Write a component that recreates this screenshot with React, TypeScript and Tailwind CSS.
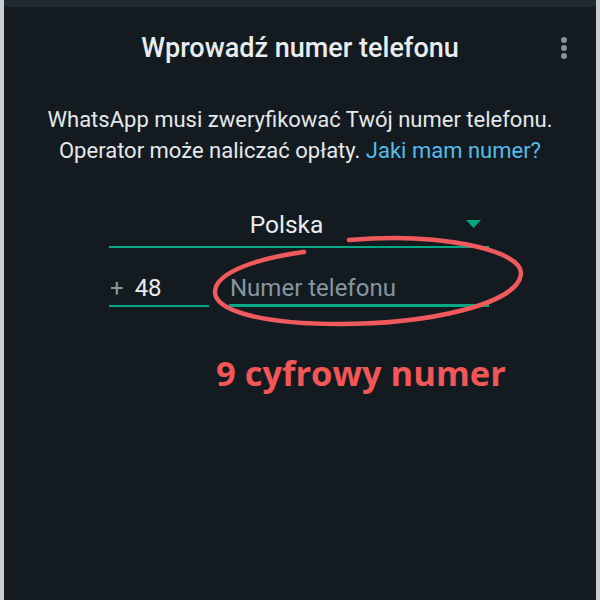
import React from "react";

const font = { fontFamily: "Roboto, 'Noto Sans', sans-serif" };

const Dots = () => (
  <svg width="8" height="24" viewBox="0 0 8 24" className="fill-[#8a9399]">
    <circle cx="4" cy="4" r="3" />
    <circle cx="4" cy="12" r="3" />
    <circle cx="4" cy="20" r="3" />
  </svg>
);

const Ellipse = () => (
  <svg
    className="pointer-events-none absolute left-[205px] top-[232px]"
    width="325"
    height="100"
    viewBox="0 0 325 100"
    fill="none"
  >
    <path
      d="M140 8 C 230 0, 314 18, 312 42 C 309 72, 220 92, 130 92 C 50 92, 6 78, 6 60 C 6 40, 50 26, 95 20"
      stroke="#f05a5c"
      strokeWidth="4.5"
      strokeLinecap="round"
    />
  </svg>
);

export default function App() {
  return (
    <div
      className="relative flex h-[600px] w-[600px] flex-col overflow-hidden border-x-4 border-[#c9ced1] bg-[#131b21]"
      style={font}
    >
      <div className="h-[7px] bg-[#1e2930]" />
      <div className="relative flex h-[82px] items-center justify-center">
        <h1 className="text-[27px] font-medium text-[#e9edef]">Wprowadź numer telefonu</h1>
        <div className="absolute right-[28px] top-[29px]">
          <Dots />
        </div>
      </div>
      <p className="mt-[15px] text-center text-[22px] leading-[31px] text-[#e4e8ea]">
        WhatsApp musi zweryfikować Twój numer telefonu.
        <br />
        Operator może naliczać opłaty. <span className="text-[#53bdeb]">Jaki mam numer?</span>
      </p>
      <div className="ml-[105px] mt-[42px] w-[380px]">
        <div className="relative flex h-[40px] items-center justify-center border-b-2 border-[#00a884]">
          <span className="mb-[4px] mr-[25px] text-[24.5px] text-[#e9edef]">Polska</span>
          <svg className="absolute right-[8px] top-[12px]" width="15" height="8" viewBox="0 0 15 8">
            <path d="M0 0 L15 0 L7.5 8 Z" fill="#00a884" />
          </svg>
        </div>
        <div className="mt-[23px] flex items-end">
          <div className="flex h-[36px] w-[100px] items-center border-b-2 border-[#00a884] pl-[1px] text-[24px]">
            <span className="text-[#8696a0]">+</span>
            <span className="ml-[11px] text-[#e9edef]">48</span>
          </div>
          <div className="ml-[20px] flex h-[36px] flex-1 items-center border-b-[3px] border-[#00a884] pl-[1px] text-[24px] text-[#8696a0]">
            Numer telefonu
          </div>
        </div>
      </div>
      <div
        className="ml-[212px] mt-[49px] text-[34.5px] font-bold leading-none text-[#f25656]"
        style={{ fontFamily: "'Open Sans', sans-serif" }}
      >
        9 cyfrowy numer
      </div>
      <Ellipse />
    </div>
  );
}
